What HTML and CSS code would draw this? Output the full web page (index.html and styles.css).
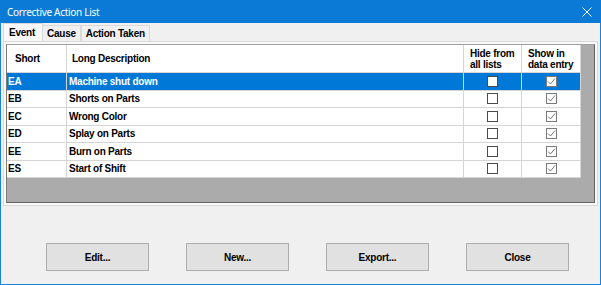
FILE: index.html
```html
<!DOCTYPE html>
<html lang="en">
<head>
    <meta charset="UTF-8">
    <title>Corrective Action List</title>
    <link rel="stylesheet" href="styles.css">
</head>
<body>
    <div class="window">
        <div class="titlebar">
            <span class="title">Corrective Action List</span>
            <svg class="close" width="10" height="10" viewBox="0 0 10 10">
                <path d="M0.5 0.5 L9.5 9.5 M9.5 0.5 L0.5 9.5" stroke="#fff" stroke-width="1"/>
            </svg>
        </div>

        <div class="tabs">
            <div class="tab active">Event</div>
            <div class="tab">Cause</div>
            <div class="tab">Action Taken</div>
        </div>

        <div class="tabpage">
            <div class="grid">
                <div class="rows">
                    <div class="cell head pad-short">Short</div>
                    <div class="cell head">Long Description</div>
                    <div class="cell head pad-flag">Hide from<br>all lists</div>
                    <div class="cell head pad-flag">Show in<br>data entry</div>

                    <!-- rows -->
                    <div class="cell selected">EA</div>
                    <div class="cell selected desc">Machine shut down</div>
                    <div class="cell selected center"><span class="box"></span></div>
                    <div class="cell selected center"><span class="box checked"><svg width="9" height="9" viewBox="0 0 9 9"><path d="M1 4.5 L3.5 7 L8 1.5" fill="none" stroke="#7a7a7a" stroke-width="1"/></svg></span></div>

                    <div class="cell">EB</div>
                    <div class="cell desc">Shorts on Parts</div>
                    <div class="cell center"><span class="box"></span></div>
                    <div class="cell center"><span class="box checked"><svg width="9" height="9" viewBox="0 0 9 9"><path d="M1 4.5 L3.5 7 L8 1.5" fill="none" stroke="#7a7a7a" stroke-width="1"/></svg></span></div>

                    <div class="cell">EC</div>
                    <div class="cell desc">Wrong Color</div>
                    <div class="cell center"><span class="box"></span></div>
                    <div class="cell center"><span class="box checked"><svg width="9" height="9" viewBox="0 0 9 9"><path d="M1 4.5 L3.5 7 L8 1.5" fill="none" stroke="#7a7a7a" stroke-width="1"/></svg></span></div>

                    <div class="cell">ED</div>
                    <div class="cell desc">Splay on Parts</div>
                    <div class="cell center"><span class="box"></span></div>
                    <div class="cell center"><span class="box checked"><svg width="9" height="9" viewBox="0 0 9 9"><path d="M1 4.5 L3.5 7 L8 1.5" fill="none" stroke="#7a7a7a" stroke-width="1"/></svg></span></div>

                    <div class="cell">EE</div>
                    <div class="cell desc">Burn on Parts</div>
                    <div class="cell center"><span class="box"></span></div>
                    <div class="cell center"><span class="box checked"><svg width="9" height="9" viewBox="0 0 9 9"><path d="M1 4.5 L3.5 7 L8 1.5" fill="none" stroke="#7a7a7a" stroke-width="1"/></svg></span></div>

                    <div class="cell">ES</div>
                    <div class="cell desc">Start of Shift</div>
                    <div class="cell center"><span class="box"></span></div>
                    <div class="cell center"><span class="box checked"><svg width="9" height="9" viewBox="0 0 9 9"><path d="M1 4.5 L3.5 7 L8 1.5" fill="none" stroke="#7a7a7a" stroke-width="1"/></svg></span></div>
                </div>
            </div>
        </div>

        <div class="buttons">
            <button>Edit...</button>
            <button>New...</button>
            <button>Export...</button>
            <button>Close</button>
        </div>
    </div>
</body>
</html>
```

FILE: styles.css
```css
body {
    margin: 0;
    font-family: "Liberation Sans", Arial, sans-serif;
}
.window {
    box-sizing: border-box;
    width: 601px;
    height: 285px;
    background: #f0f0f0;
    border: 1px solid #1a82d8;
    border-top: none;
}
.titlebar {
    height: 23px;
    margin: 0 -1px;
    background: #0a7ad6;
    color: #fff;
    display: flex;
    align-items: center;
    justify-content: space-between;
    padding: 0 8px 0 7px;
}
.title {
    font-family: "Noto Sans", sans-serif;
    font-size: 10px;
    letter-spacing: -0.3px;
}
.close {
    margin-right: 1px;
}
.tabs {
    display: flex;
    align-items: flex-end;
    height: 18px;
    padding-left: 2px;
}
.tab {
    font-size: 10px;
    font-weight: bold;
    letter-spacing: -0.25px;
    height: 15px;
    line-height: 15px;
    padding: 0 4px;
    border: 1px solid #d9d9d9;
    border-bottom: none;
    background: #f0f0f0;
}
.tab.active {
    height: 17px;
    line-height: 17px;
    background: #f9f9f9;
    padding: 0 7px 0 5px;
    margin-right: -1px;
    position: relative;
    z-index: 1;
}
.tabpage {
    margin: 0 2px;
    border: 1px solid #d9d9d9;
    background: #f9f9f9;
    padding: 2px;
    height: 159px;
}
.grid {
    height: 159px;
    box-sizing: border-box;
    background: #ababab;
    border: 1px solid #646464;
    border-top-color: #a0a0a0;
    border-left-color: #7a7a7a;
}
.rows {
    display: grid;
    grid-template-columns: 60px 397px 58px 59px;
    grid-template-rows: 28px repeat(6, 17.5px);
    width: 574px;
}
.cell {
    box-sizing: border-box;
    background: #fff;
    border-right: 1px solid #d5d5d5;
    border-bottom: 1px solid #d5d5d5;
    font-size: 10px;
    font-weight: bold;
    letter-spacing: -0.25px;
    color: #000;
    padding-left: 1px;
    display: flex;
    align-items: center;
    white-space: nowrap;
}
.cell.desc {
    padding-left: 2px;
}
.cell.head {
    line-height: 11px;
    padding-left: 5px;
}
.cell.pad-short {
    padding-left: 8px;
}
.cell.pad-flag {
    padding-left: 6px;
}
.cell.center {
    justify-content: center;
    padding-left: 0;
}
.cell.selected {
    background: #0078d7;
    color: #fff;
}
.box {
    box-sizing: border-box;
    width: 11px;
    height: 11px;
    background: #fff;
    border: 1px solid #4a4a4a;
    display: flex;
    align-items: center;
    justify-content: center;
}
.box.checked {
    border-color: #7a7a7a;
}
.buttons {
    display: flex;
    gap: 37px;
    padding: 37px 0 0 45px;
}
button {
    width: 103px;
    height: 28px;
    background: #e1e1e1;
    border: 1px solid #adadad;
    font-family: "Liberation Sans", Arial, sans-serif;
    font-size: 10px;
    font-weight: bold;
    letter-spacing: -0.25px;
    color: #000;
    padding: 0;
}
```
